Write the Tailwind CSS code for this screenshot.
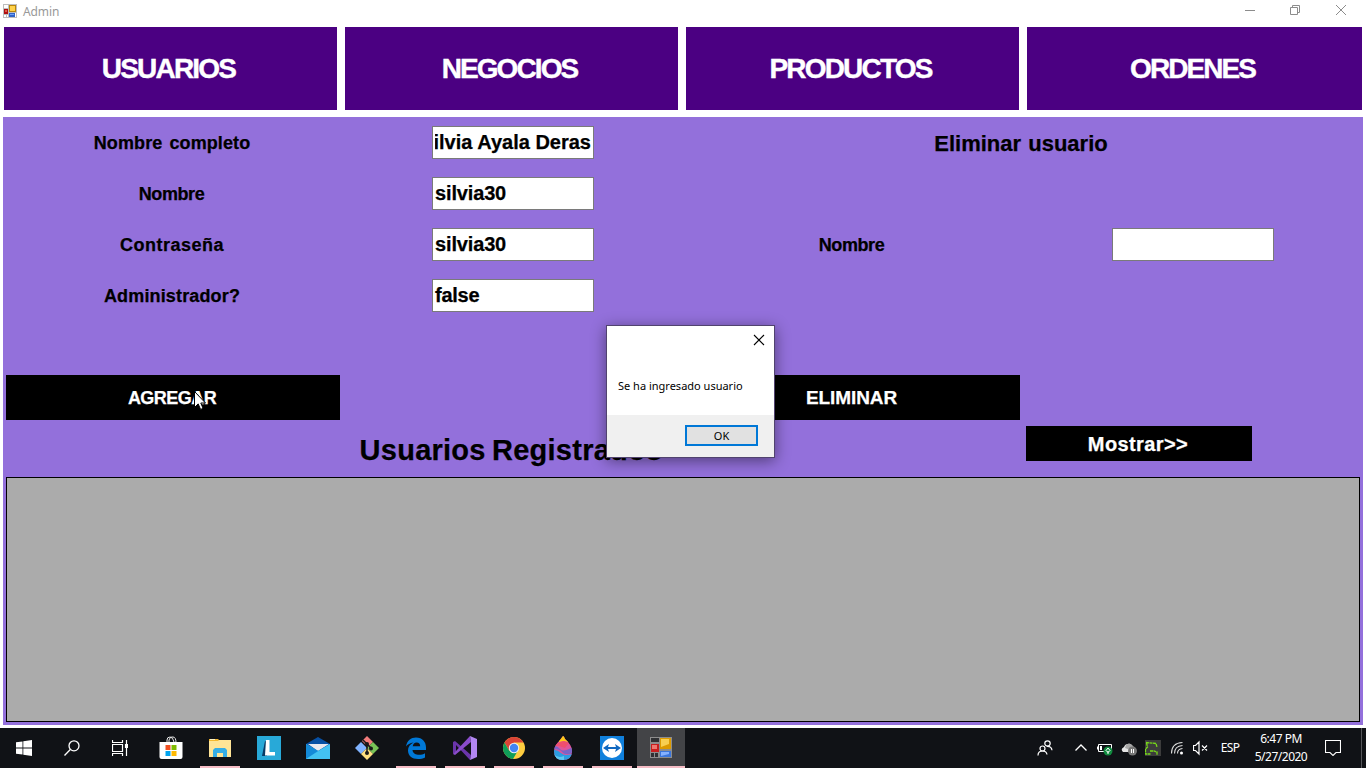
<!DOCTYPE html>
<html lang="es">
<head>
<meta charset="utf-8">
<title>Admin</title>
<script src="https://cdn.jsdelivr.net/npm/@tailwindcss/browser@4"></script>
</head>
<body class="relative w-[1366px] h-[768px] overflow-hidden bg-white font-['Liberation_Sans',sans-serif] text-black">
<div class="flex h-full flex-col">
  <!-- Title bar -->
  <header class="flex h-[27px] shrink-0 justify-between">
    <div class="flex pl-[3px] pt-1">
      <svg class="h-[14px] w-[14px]" viewBox="0 0 14 14"><path fill="#bdbdbd" d="M0 0h14v14H0z"/><path fill="#fff" d="M1 1h4v3H1zM1 11h2v2H1zM4 11h1v2H4zM12 9h1v4h-1z"/><path fill="#b01010" d="M1 5h4v5H1z"/><path fill="#e05a48" d="M2 6h2v2H2z"/><path fill="#b8860b" d="M6 1h7v7H6z"/><path fill="#ffd24a" d="M7 2h5v5H7z"/><path fill="#2f62c9" d="M6 9h6v4H6z"/><path fill="#6fa0f5" d="M7 10h4v1H7z"/></svg>
      <span class="ml-1.5 mt-[-1px] font-['Noto_Sans',sans-serif] text-[12px] leading-[17px] tracking-[-0.1px] text-[#999]">Admin</span>
    </div>
    <div class="flex text-[#8c8c8c]">
      <svg class="h-[21px] w-[46px]" viewBox="0 0 46 21" fill="none" stroke="currentColor"><path d="M18 10.500h10"/></svg>
      <svg class="h-[21px] w-[46px]" viewBox="0 0 46 21" fill="none" stroke="currentColor"><path d="M17.500 7.500h7v7h-7zM19.500 7.500v-2h7v7h-2"/></svg>
      <svg class="h-[21px] w-[46px]" viewBox="0 0 46 21" fill="none" stroke="currentColor"><path d="M17 5l10 10M27 5l-10 10"/></svg>
      <div class="w-px"></div>
    </div>
  </header>

  <!-- Section tabs -->
  <nav class="flex h-[83px] shrink-0 gap-2 pl-1 pr-1 text-[28px] font-bold text-white [-webkit-text-stroke:0.4px]">
    <div class="flex w-[333px] items-center justify-center bg-[#4b0082] pr-1 pt-px tracking-[-1.800px]">USUARIOS</div>
    <div class="flex w-[333px] items-center justify-center bg-[#4b0082] pr-1 pt-px tracking-[-1.900px]">NEGOCIOS</div>
    <div class="flex w-[333px] items-center justify-center bg-[#4b0082] pr-1 pt-px tracking-[-1.800px]">PRODUCTOS</div>
    <div class="flex w-[335px] items-center justify-center bg-[#4b0082] pr-1 pt-px tracking-[-1.950px]">ORDENES</div>
  </nav>

  <!-- User management -->
  <main class="mx-[3px] mt-[7px] h-[608px] shrink-0 bg-[#9370db] font-bold [-webkit-text-stroke:0.25px]">
    <div class="grid grid-cols-[340px_340px_340px_340px] grid-rows-[repeat(7,51px)] place-items-center text-[18px]">
      <div class="pr-0.5 pt-0.5 tracking-[0.1px] [word-spacing:2px]">Nombre completo</div>
      <div class="flex h-[33px] w-[162px] items-center justify-end border border-[#7a7a7a] bg-white px-[2px] pb-0.5"><div class="flex w-full justify-end overflow-hidden whitespace-nowrap text-[20px]">Silvia Ayala Deras</div></div>
      <div class="col-span-2 pr-1 pt-0.5 text-[22px] [word-spacing:1px]">Eliminar usuario</div>

      <div class="pr-[3px] pt-0.5 tracking-[-0.400px]">Nombre</div>
      <div class="flex h-[33px] w-[162px] items-center border border-[#7a7a7a] bg-white px-[2px] pb-0.5 text-[20px] tracking-[-0.150px]">silvia30</div>
      <div class="col-span-2"></div>

      <div class="pr-0.5 pt-0.5 tracking-[0.500px]">Contraseña</div>
      <div class="flex h-[33px] w-[162px] items-center border border-[#7a7a7a] bg-white px-[2px] pb-0.5 text-[20px] tracking-[-0.150px]">silvia30</div>
      <div class="pr-[3px] pt-0.5 tracking-[-0.400px]">Nombre</div>
      <div class="h-[33px] w-[162px] border border-[#7a7a7a] bg-white"></div>

      <div class="pr-0.5 pt-0.5 tracking-[0.150px]">Administrador?</div>
      <div class="flex h-[33px] w-[162px] items-center border border-[#7a7a7a] bg-white px-[2px] pb-0.5 text-[20px] tracking-[-0.250px]">false</div>
      <div class="col-span-2"></div>

      <div class="col-span-4"></div>

      <div class="flex h-[45px] w-[334px] items-center justify-center bg-black pr-0.5 pt-0.5 tracking-[-0.550px] text-white">AGREGAR</div>
      <div></div>
      <div class="flex h-[45px] w-[334px] items-center justify-center bg-black pr-[3px] pt-0.5 text-[19px] tracking-[-0.100px] text-white">ELIMINAR</div>
      <div></div>

      <div class="col-span-3 pr-1 pt-1 text-[29px] tracking-[0.250px] [word-spacing:-2px]">Usuarios Registrados</div>
      <div class="ml-[3px] mt-[3px] flex h-[35px] w-[226px] items-center justify-center self-start justify-self-start bg-black pr-0.5 text-[20px] tracking-[0.400px] text-white">Mostrar&gt;&gt;</div>
    </div>
    <div class="mx-[3px] mt-[3px] h-[245px] border border-black bg-[#ababab]"></div>
  </main>

  <!-- Taskbar -->
  <footer class="mt-[3px] flex h-10 shrink-0 justify-between bg-[#101216] text-white">
    <div class="flex">
      <div class="flex w-12 items-center justify-center"><svg class="h-4 w-4" viewBox="0 0 16 16" fill="#fff"><path d="M0 2.300L6.500 1.400V7.600H0zM7.300 1.300L16 0v7.600H7.300zM0 8.400h6.500v6.200L0 13.700zM7.300 8.400H16V16l-8.700-1.200z"/></svg></div>
      <div class="flex w-12 items-center justify-center"><svg class="h-4 w-4" viewBox="0 0 16 16" fill="none" stroke="#fff" stroke-width="1.300"><circle cx="10" cy="5.800" r="5"/><path d="M6.300 9.500L.5 15.500"/></svg></div>
      <div class="flex w-12 items-center justify-center"><svg class="h-4 w-4" viewBox="0 0 16 16" fill="none" stroke="#fff" stroke-width="1.200"><path d="M.5 0v2.500h10V0M.5 4.500h10v7H.5zM.5 16v-2.500h10V16M14.500 0v4M14.500 8v8"/><path fill="#fff" d="M13.500 4.500h2v3h-2z"/></svg></div>
      <div class="ml-[3px] flex gap-px">
        <div class="flex w-12 items-center justify-center"><svg class="h-6 w-6" viewBox="0 0 24 24"><path d="M8 7V4q0-3 3-3t4 5M10 6V4q1-4 4-3 3 0 3 6" fill="none" stroke="#e8e8e8"/><path fill="#fff" d="M.5 6h23v15q0 2-2 2h-19q-2 0-2-2z"/><path fill="#f25022" d="M6.500 9h5v5h-5z"/><path fill="#7fba00" d="M12.500 9h5v5h-5z"/><path fill="#00a4ef" d="M6.500 15h5v5h-5z"/><path fill="#ffb900" d="M12.500 15h5v5h-5z"/></svg></div>
        <div class="relative flex w-12 items-center justify-center"><svg class="h-6 w-6" viewBox="0 0 24 24"><path fill="#f5b82e" d="M1 3h9l2 2h10v5H1z"/><path fill="#ffe496" d="M1 5h9l1-1h12v17H1z"/><path fill="#fff3c4" d="M2 3h5v1H2z"/><path fill="#35ade6" d="M5 21v-7l2-2h10l2 2v7h-4v-4H9v4z"/></svg><div class="absolute bottom-0 h-0.5 w-10 bg-[#f5bcc5]"></div></div>
        <div class="flex w-12 items-center justify-center"><svg class="h-6 w-6" viewBox="0 0 24 24"><path fill="#28a9d8" d="M0 0h24v24H0z"/><path fill="#083b66" d="M8 5L5 20h5V6z"/><path fill="#fff" d="M9 4h3.500v12H18v3.500H8z"/></svg></div>
        <div class="flex w-12 items-center justify-center"><svg class="h-6 w-6" viewBox="0 0 24 24"><path fill="#0750a4" d="M0 8L12 1l12 7v8H0z"/><path fill="#e9e9ef" d="M2 8h21L12 15z"/><path fill="#32b8ef" d="M0 8l12 7 12-7v15H0z"/><path fill="#148ad8" d="M0 23l12-8-12-7z"/><path fill="#5dd3f7" d="M0 23l24-15v15z" opacity=".4"/></svg></div>
        <div class="flex w-12 items-center justify-center"><svg class="h-6 w-6" viewBox="0 0 24 24"><path fill="#f37c7c" d="M12 0l6 6-5 5-6-6z"/><path fill="#80b3ff" d="M6 6l6 6-6 6-6-6z"/><path fill="#79c257" d="M18 6l6 6-6 6-6-6z"/><path fill="#ffe080" d="M12 12l6 6-6 6-6-6z"/><path d="M8 4l4 4v10M12 8l4 4" stroke="#191919" stroke-width="1.500" fill="none"/><circle cx="12" cy="8" r="2" fill="#191919"/><circle cx="12" cy="17" r="2" fill="#191919"/><circle cx="16" cy="12.500" r="2" fill="#191919"/></svg></div>
        <div class="relative flex w-12 items-center justify-center"><svg class="h-6 w-6" viewBox="0 0 24 24"><path fill="#0078d7" d="M2 10.500C3 4.500 7 1.500 12 1.500c6.500 0 10 4.500 10 10V14H8.500c.3 3.500 3.500 4.800 6.500 4.800 2.400 0 4.400-.6 6-1.600V21.500c-2 1-4.300 1.500-7 1.500-6 0-10-3.500-10-8.500 0-3.600 2-6.500 5.500-8C6 7 3.500 8.500 2 10.500z"/><path fill="#101216" d="M8.700 10.200h7.500c0-2.300-1.200-3.800-3.600-3.800-2.200 0-3.500 1.500-3.900 3.800z"/></svg><div class="absolute bottom-0 h-0.5 w-10 bg-[#f5bcc5]"></div></div>
        <div class="relative flex w-12 items-center justify-center"><svg class="h-6 w-6" viewBox="0 0 24 24"><path fill="#6b35ab" d="M0 6l2-1 16 14-1 5L3 9v7l-3 2z"/><path fill="#8a4ccb" d="M0 18l2 1L18 6l-1-6L3 15z"/><path fill="#b287f2" d="M17 0l7 3v18l-7 3 1-5V6z"/></svg><div class="absolute bottom-0 h-0.5 w-10 bg-[#f5bcc5]"></div></div>
        <div class="relative flex w-12 items-center justify-center"><svg class="h-6 w-6" viewBox="0 0 24 24"><circle cx="12" cy="12" r="11" fill="#ffcd40"/><path fill="#db4437" d="M2.500 6.500A11 11 0 0 1 21.500 6.500H12L7.300 14.800z"/><path fill="#0f9d58" d="M2.500 6.500A11 11 0 0 0 11 23l5-8.500-8.800.3z"/><circle cx="12" cy="12" r="5.200" fill="#f1f1f1"/><circle cx="12" cy="12" r="4.200" fill="#4285f4"/></svg><div class="absolute bottom-0 h-0.5 w-10 bg-[#f5bcc5]"></div></div>
        <div class="relative flex w-12 items-center justify-center"><svg class="h-6 w-6" viewBox="0 0 24 24"><defs><clipPath id="drop"><path d="M12 0q1 0 2 3 7 6 7 12 0 9-9 9t-9-9Q3 10 9 4z"/></clipPath></defs><g clip-path="url(#drop)"><path fill="#e0559b" d="M0 0h24v24H0z"/><path fill="#ffca18" d="M8 0h9v6l-4-1-5 1z"/><path fill="#f04e6e" d="M9 6l4-1 5 2-4 5-6-2-6 0z"/><path fill="#7965c8" d="M0 10q6-1 9 3t13-2v6q-8 3-11-1t-11-2z"/><path fill="#2b9de2" d="M0 14q6-1 10 3t14 0v7H0z"/><path fill="#5cc8ef" d="M2 17q4 6 11 3v4H3z"/></g></svg><div class="absolute bottom-0 h-0.5 w-10 bg-[#f5bcc5]"></div></div>
        <div class="relative flex w-12 items-center justify-center"><svg class="h-6 w-6" viewBox="0 0 24 24"><path fill="#1080dc" d="M0 0h24v24H0z"/><circle cx="12" cy="12" r="10" fill="#fff"/><path fill="#1068c0" d="M3 12l6-4-1 3h8l-1-3 6 4-6 4 1-3H8l1 3z"/></svg><div class="absolute bottom-0 h-0.5 w-10 bg-[#f5bcc5]"></div></div>
        <div class="relative flex w-12 items-center justify-center bg-[#434447]"><svg class="h-6 w-6" viewBox="0 0 24 24"><path fill="#8d8d8d" d="M1 1h22v21H1z"/><path fill="#303134" d="M2 2h8v4H2zM2 17h3v4H2zM6 17h3v4H6z"/><path fill="#c81e1e" d="M2 8h8v8H2z"/><path fill="#ef7770" d="M3 9h5v4H3z"/><path fill="#dc9a00" d="M11 2h11v11H11z"/><path fill="#f8cf50" d="M12 3h8v5l-8 3z"/><path fill="#3b76dc" d="M11 15h11v6H11z"/><path fill="#85b1ff" d="M12 16h8v2l-8 2z"/></svg><div class="absolute bottom-0 h-0.5 w-12 bg-[#f5bcc5]"></div></div>
      </div>
    </div>
    <div class="flex font-['Noto_Sans',sans-serif] text-[12px]">
      <div class="mr-[14px] flex w-5 items-center justify-center"><svg class="h-4 w-4" viewBox="0 0 16 16" fill="none" stroke="#fff" stroke-width="1.200"><circle cx="10.500" cy="3.500" r="2.700"/><circle cx="5.500" cy="8.500" r="2.500"/><path d="M1 15.500q0-4.500 4.500-4.500 4 0 4.500 3.500M10 6.300q4.500-.3 5 4"/></svg></div>
      <div class="flex w-6 items-center justify-center"><svg class="h-4 w-4" viewBox="0 0 16 16" fill="none" stroke="#fff" stroke-width="1.300"><path d="M2.500 10.500L8 5l5.500 5.500"/></svg></div>
      <div class="flex w-6 items-center justify-center"><svg class="h-4 w-4" viewBox="0 0 16 16"><path fill="none" stroke="#fff" d="M1.500 4.500h13v7h-13zM.5 6.500v3"/><path fill="#fff" d="M3 6h2v4H3z"/><circle cx="11" cy="11" r="4.500" fill="#108a3e"/><path d="M11 8l2 2.500-2 2-2-2zM11 11v3" fill="none" stroke="#fff"/></svg></div>
      <div class="flex w-6 items-center justify-center"><svg class="h-4 w-4" viewBox="0 0 16 16"><path fill="#e5e5e5" d="M2 12q-3-3 1-5 1-3 4-3 3-1 5 3l3 4v1z"/><path fill="#a8a8a8" d="M5 5q3-3 6 0l3 3-5 2-5-2z"/><circle cx="11.500" cy="11" r="4.500" fill="#777"/><path d="M10.500 9v4M12.500 9v4" stroke="#fff"/></svg></div>
      <div class="flex w-6 items-center justify-center"><svg class="h-4 w-4" viewBox="0 0 16 16"><path fill="#3c3c3c" d="M0 0h16v16H0z"/><path fill="none" stroke="#77d918" stroke-width="1.300" stroke-dasharray="3 .5" d="M1 2.500l10 1 1 3.500M1.500 3l1 4-2 2v5h5M5 11h4l3 1v3"/></svg></div>
      <div class="flex w-6 items-center justify-center"><svg class="h-4 w-4" viewBox="0 0 16 16" fill="none" stroke="#ddd" stroke-width="1.100"><path d="M2.500 13.500Q2.500 3 13.500 2.500M5.500 13.500Q5.500 6 13.500 5.500M8.500 13.500Q8.500 9 13.500 8.500"/><circle cx="12.500" cy="13" r="1.500" fill="#fff" stroke="none"/></svg></div>
      <div class="flex w-6 items-center justify-center"><svg class="h-4 w-4" viewBox="0 0 16 16" fill="none" stroke="#fff" stroke-width="1.200"><path d="M.5 5.500h2l3.500-3.500v12l-3.500-3.500h-2zM9 5.500l5 5M14 5.500l-5 5"/></svg></div>
      <div class="flex w-[34px] items-center justify-center tracking-[-0.600px]">ESP</div>
      <div class="flex w-[68px] flex-col items-center pt-0.5 leading-[18px]"><div class="tracking-[-0.500px]">6:47 PM</div><div class="tracking-[-0.500px]">5/27/2020</div></div>
      <div class="flex w-9 items-center justify-center"><svg class="h-4 w-4" viewBox="0 0 16 16" fill="none" stroke="#fff" stroke-width="1.100"><path d="M.5.500h15v12H11l-3 3-3-3H.5z"/></svg></div>
      <div class="mr-1 w-[11px] border-r border-[#55565a]"></div>
    </div>
  </footer>
</div>

<!-- Message box -->
<div class="absolute left-[606px] top-[325px] flex h-[133px] w-[169px] flex-col border border-[#51436f] bg-white font-['Noto_Sans',sans-serif] text-[11px] shadow-[0_3px_14px_rgba(0,0,0,0.45)]">
  <div class="flex h-[28px] items-center justify-end pr-[9px]"><svg class="h-3 w-3" viewBox="0 0 12 12" fill="none" stroke="#000" stroke-width="1.100"><path d="M1 1l10 10M11 1l-10 10"/></svg></div>
  <div class="flex h-[61px] items-center pl-[11px] pt-1 whitespace-nowrap">Se ha ingresado usuario</div>
  <div class="flex flex-1 justify-end bg-[#f0f0f0] pr-4 pt-2.5"><div class="flex h-[21px] w-[73px] items-center justify-center border-2 border-[#0078d7] bg-[#e1e1e1] pt-0.5">OK</div></div>
</div>

<!-- Mouse pointer -->
<svg class="absolute left-[194px] top-[391px] h-[19px] w-[12px]" viewBox="0 0 12 19"><path d="M.5.500v16l3.700-3.600L6.600 18.400l2.500-1L6.800 12h4.700z" fill="#fff" stroke="#000"/></svg>
</body>
</html>
